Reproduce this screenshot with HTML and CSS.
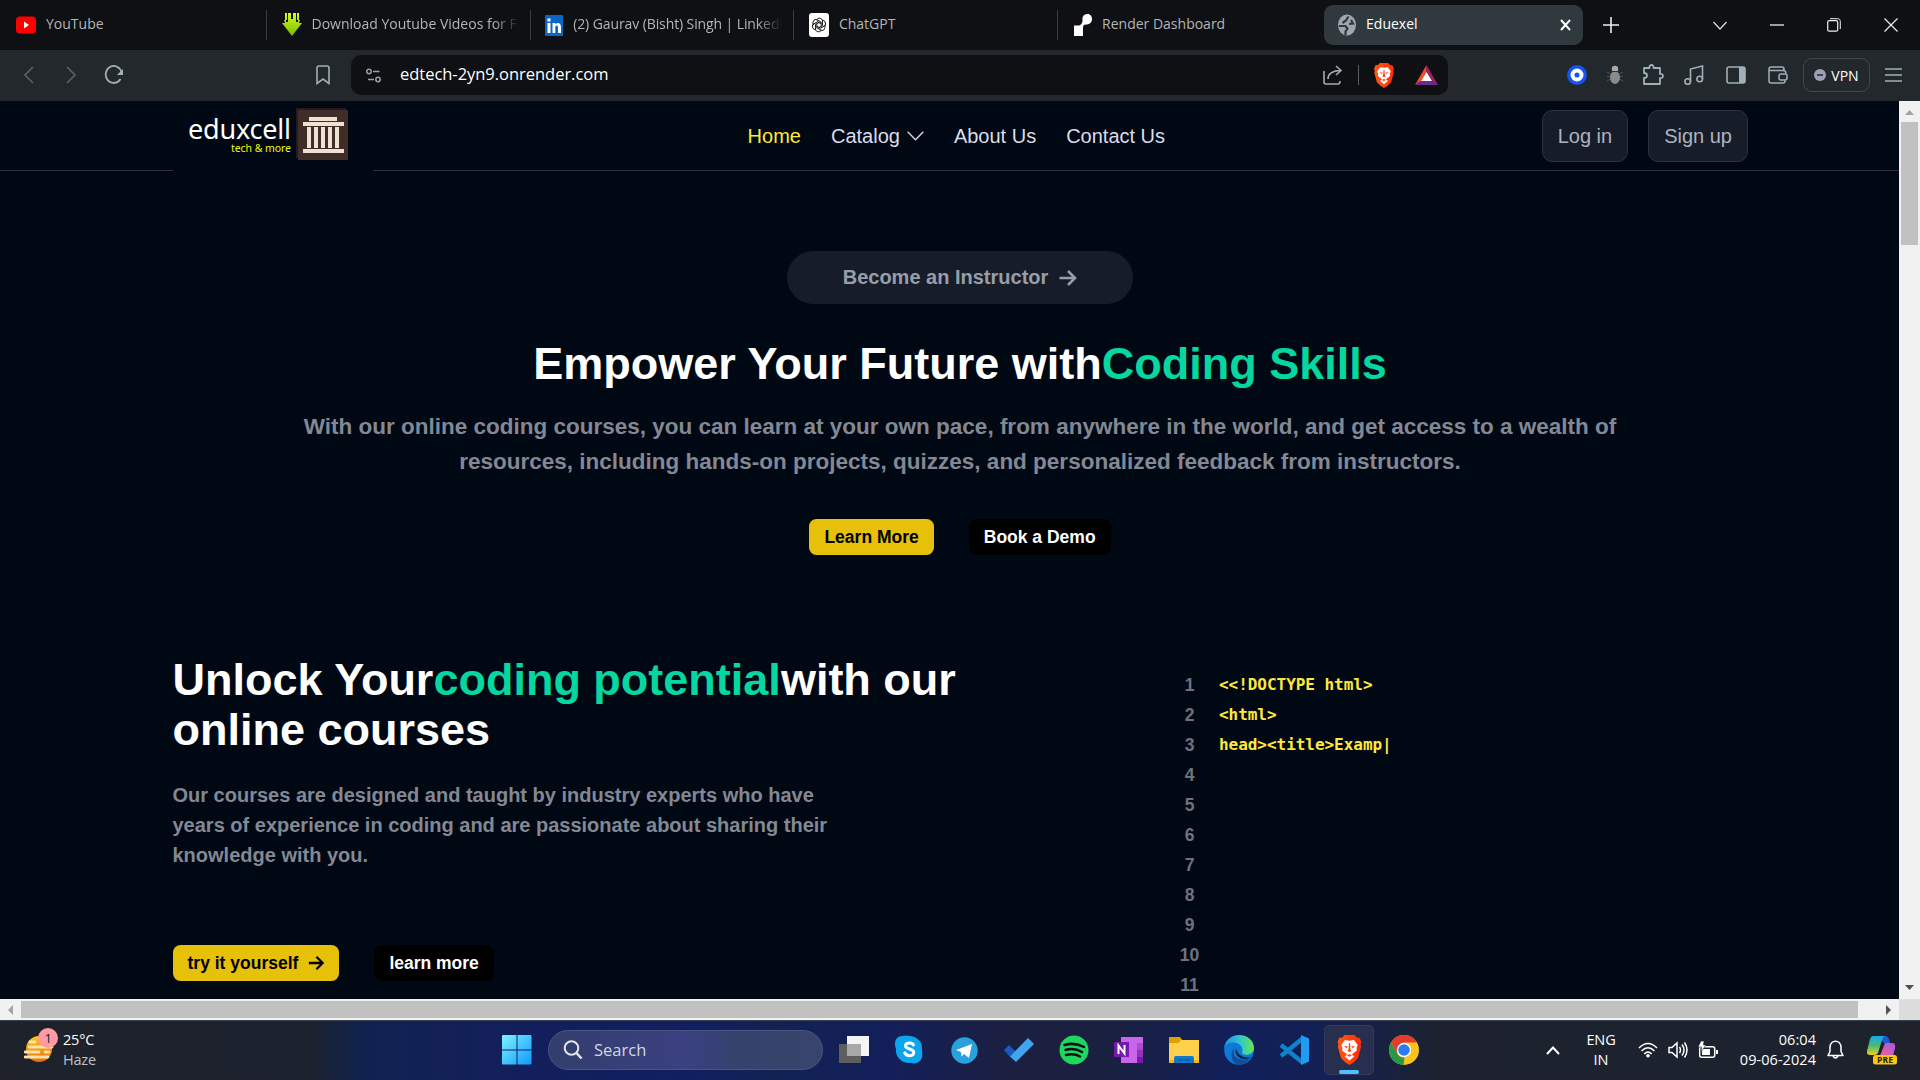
FILE: index.html
```html
<!DOCTYPE html>
<html lang="en">
<head>
<meta charset="utf-8">
<title>Eduexel</title>
<link rel="stylesheet" href="styles.css">
</head>
<body>
<svg width="0" height="0" class="defs" aria-hidden="true">
  <defs>
    <linearGradient id="bg1" x1="0" x2="1"><stop offset="0" stop-color="#ff5a13"/><stop offset="1" stop-color="#ff2a0a"/></linearGradient>
    <symbol id="brave" viewBox="0 0 24 30">
      <path fill="url(#bg1)" d="M7 0h10l2.500 2.800 2.500-.3L24 7l-1 2.500.7 2-3.200 11.500L16 27.500 12 30l-4-2.500L3.500 23 .3 11.500l.7-2L0 7l2-4.500 2.500.3z"/>
      <path fill="#fff" d="M7.500 5l4.500.8 4.500-.8 3.700 5-1.200 3 .3 2.500-5 4 2.500 2L12 25.500 7.200 21.500l2.500-2-5-4 .3-2.500-1.200-3z"/>
      <path fill="#ff3d10" d="M6.500 11l4 .6-1.500 1.600zM17.500 11l-4 .6 1.500 1.600zM11.500 8h1l.5 6.500 1 1.500-2 1-2-1 1-1.500zM9.500 20.300l2.500-1 2.500 1-2.500 1.400z"/>
    </symbol>
    <symbol id="arrow" viewBox="0 0 18 18"><path d="M1 9h15M9.500 2l7 7-7 7" fill="none" stroke="currentColor" stroke-width="2.600"/></symbol>
  </defs>
</svg>

<div class="tabs">
  <div class="tab"><svg width="20" height="18" viewBox="0 0 20 18"><rect width="20" height="17" rx="4" y=".5" fill="#f00"/><path d="M8 5.500l5 3.500-5 3.500z" fill="#fff"/></svg><span class="tx">YouTube</span></div>
  <div class="tab"><svg width="20" height="24" viewBox="0 0 20 24"><defs><linearGradient id="dl" x2="0" y2="1"><stop stop-color="#cf2"/><stop offset="1" stop-color="#7db800"/></linearGradient></defs><path fill="url(#dl)" d="M3 0h2v7H3zM15 0h2v7h-2zM6 0h3v6h2V0h3v9h2v-2h2l-1 3h3l-10 13L0 10h3L2 7h2v2h2z"/></svg><span class="tx">Download Youtube Videos for Fr</span></div>
  <div class="tab"><svg width="18" height="21" viewBox="0 0 18 21"><rect width="18" height="21" rx="1" fill="#0a66c2"/><path fill="#fff" d="M2.500 8h3v10h-3zM2.500 3.500h3v3h-3zM7.500 8h2.800v1.500C12 7 16 7.500 16 12v6h-3v-5.500c0-3-2.700-2.500-2.700 0V18H7.500z"/></svg><span class="tx tx-li">(2) Gaurav (Bisht) Singh | LinkedIn</span></div>
  <div class="tab"><svg width="20" height="24" viewBox="0 0 20 24"><rect width="20" height="24" rx="3" fill="#fff"/><g fill="none" stroke="#222" stroke-width="1"><path id="petal" d="M7.500 7c1.500-3 6-2 6 1v4.500L10 14.500"/><use href="#petal" transform="rotate(60 10 12)"/><use href="#petal" transform="rotate(120 10 12)"/><use href="#petal" transform="rotate(180 10 12)"/><use href="#petal" transform="rotate(240 10 12)"/><use href="#petal" transform="rotate(300 10 12)"/></g></svg><span class="tx">ChatGPT</span></div>
  <div class="tab"><svg width="18" height="22" viewBox="0 0 18 22"><path fill="#fff" d="M8.500 6C8 2 10.500 0 13.500 0S18 2.500 18 5c0 4-3 5.500-6 5.500-2 0-3 1-3 3V22H0V11.500h4.500C7 11.500 8.500 9 8.500 6z"/></svg><span class="tx">Render Dashboard</span></div>
  <div class="tab active"><svg width="18" height="22" viewBox="0 0 18 22"><ellipse cx="9" cy="11" rx="9" ry="10.500" fill="#9fa6ac"/><path d="M10.500 2.500L8 6.500 4.500 9M1 12h6.500l2 2.500-2 3V21M13 6l2 3.500-4 .5" fill="none" stroke="#30393e" stroke-width="2.200"/></svg><span class="tx">Eduexel</span><svg class="x" width="11" height="12" viewBox="0 0 11 12"><path d="M1 1l9 10M10 1L1 11" stroke="#fff" stroke-width="2"/></svg></div>
  <div class="wins">
    <svg width="16" height="16" viewBox="0 0 16 16"><path d="M8 0v16M0 8h16" stroke="#eee" stroke-width="1.600"/></svg>
    <svg class="w2" width="14" height="9" viewBox="0 0 14 9"><path d="M.5 1L7 8l6.500-7" fill="none" stroke="#ddd" stroke-width="1.200"/></svg>
    <svg width="14" height="2"><path d="M0 1h14" stroke="#eee" stroke-width="1.300"/></svg>
    <svg width="14" height="14" viewBox="0 0 14 14"><path d="M3 .7h7.500c2 0 2.800 1 2.800 2.800V11" fill="none" stroke="#eee"/><rect x=".7" y="2.700" width="10" height="10.500" rx="1.500" fill="none" stroke="#eee" stroke-width="1.200"/></svg>
    <svg width="14" height="14" viewBox="0 0 14 14"><path d="M.5.5l13 13M13.500.5l-13 13" stroke="#eee" stroke-width="1.200"/></svg>
  </div>
</div>

<div class="toolbar">
  <div class="navbtns">
    <svg width="10" height="18" viewBox="0 0 10 18"><path d="M9 1L1 9l8 8" fill="none" stroke="#5a6165" stroke-width="1.600"/></svg>
    <svg width="10" height="18" viewBox="0 0 10 18"><path d="M1 1l8 8-8 8" fill="none" stroke="#5a6165" stroke-width="1.600"/></svg>
    <svg width="20" height="20" viewBox="0 0 20 20"><path d="M17.500 7.500A8 8.500 0 1 0 16.500 14" fill="none" stroke="#9fb0b8" stroke-width="1.800"/><path d="M19 4v6h-6z" fill="#9fb0b8"/></svg>
    <svg class="bm" width="14" height="20" viewBox="0 0 14 20"><path d="M1 18.500V3q0-2 2-2h8q2 0 2 2v15.500L7 14z" fill="none" stroke="#9fb0b8" stroke-width="1.600"/></svg>
  </div>
  <div class="url">
    <svg width="15" height="15" viewBox="0 0 15 15"><g fill="none" stroke="#9aa0a6" stroke-width="1.500"><circle cx="3" cy="3.500" r="2.200"/><path d="M7 3.500h6.500M2 11.500h6"/><circle cx="12" cy="11.500" r="2.200"/></g></svg>
    <span class="addr">edtech-2yn9.onrender.com</span>
    <svg width="20" height="20" viewBox="0 0 20 20"><path d="M1 6v11q0 2 2 2h12q2 0 2-3M5 14c0-5 3-8 12-8.500M13 1l5 4.500-5 4.500" fill="none" stroke="#a5acb0" stroke-width="1.600"/></svg>
    <i class="vsep"></i>
    <svg width="20" height="25"><use href="#brave"/></svg>
    <svg class="bat" width="23" height="20" viewBox="0 0 23 20"><path fill="#ff4724" d="M11.500 0v7L6 16l-6 4z"/><path fill="#9e1f63" d="M11.500 0L23 20l-6-4-5.500-9z"/><path fill="#662d91" d="M0 20l6-4h11l6 4z"/><path fill="#fff" d="M11.500 7l5.500 9H6z"/></svg>
  </div>
  <div class="ext">
    <svg width="20" height="20" viewBox="0 0 20 20"><circle cx="10" cy="10" r="10" fill="#1554f0"/><circle cx="10" cy="10" r="4.500" fill="#1554f0" stroke="#fff" stroke-width="4"/></svg>
    <svg width="18" height="20" viewBox="0 0 18 20"><path d="M1 7l16 9M17 7L1 16M1 11.500h16" stroke="#4e5254"/><ellipse cx="9" cy="12.500" rx="5" ry="6.500" fill="#8a8a8a"/><circle cx="9" cy="4" r="3.200" fill="#aaa"/><path d="M5 6.500h8" stroke="#333"/></svg>
    <svg width="22" height="22" viewBox="0 0 22 22"><path d="M2 4h5.500c-1-4 5-4 4 0H18v6c4-1 4 5 0 4v6H2v-6c4 0 4-5 0-5z" fill="none" stroke="#9fb0b8" stroke-width="1.800" stroke-linejoin="round"/></svg>
    <svg width="20" height="20" viewBox="0 0 20 20"><path d="M6.500 16.500V4L18.500 1v13" fill="none" stroke="#9fb0b8" stroke-width="1.600"/><circle cx="3.700" cy="16.500" r="2.800" fill="none" stroke="#9fb0b8" stroke-width="1.600"/><circle cx="15.700" cy="14" r="2.800" fill="none" stroke="#9fb0b8" stroke-width="1.600"/></svg>
    <svg width="20" height="18" viewBox="0 0 20 18"><rect x="1" y="1" width="18" height="16" rx="2" fill="none" stroke="#9fb0b8" stroke-width="1.600"/><path d="M13 1h6v16h-6z" fill="#9fb0b8"/></svg>
    <svg width="20" height="18" viewBox="0 0 20 18"><path d="M16 5V3q0-2-2-2H3Q1 1 1 3v12q0 2 2 2h12q2 0 2-2v-1M1 4.500h14q3 0 3 3" fill="none" stroke="#9fb0b8" stroke-width="1.500"/><rect x="11" y="8" width="8" height="6" rx="2" fill="none" stroke="#9fb0b8" stroke-width="1.500"/></svg>
  </div>
  <div class="vpn"><svg width="12" height="12" viewBox="0 0 12 12"><circle cx="6" cy="6" r="6" fill="#9c9fb5"/><path d="M3 6h6" stroke="#22282b" stroke-width="1.500"/></svg><span>VPN</span></div>
  <svg class="burger" width="17" height="14" viewBox="0 0 17 14"><path d="M0 1h17M0 7h17M0 13h17" stroke="#9fb0b8" stroke-width="1.500"/></svg>
</div>

<div class="view">
  <div class="page">
    <header class="header">
      <svg class="logo" width="200" height="70" viewBox="0 0 200 70">
        <text x="15" y="38" textLength="103" font-size="27" fill="#fff">eduxcell</text>
        <text x="58" y="51" textLength="60" font-size="10.500" fill="#f5f50a">tech &amp; more</text>
        <path fill="#231b22" d="M123 7h50v50h-50z"/><path fill="#402d28" d="M125 9h50v50h-50z"/>
        <path fill="#eee2d3" d="M136 16h28v4h-28zM130 21h41v4h-41zM134 26h4v21h-4zM141 26h4v21h-4zM148 26h4v21h-4zM155 26h4v21h-4zM162 26h4v21h-4zM130 48h41v4h-41z"/>
      </svg>
      <nav class="menu"><a class="on">Home</a><a class="cat">Catalog<svg width="17" height="10" viewBox="0 0 17 10"><path d="M.7.8l7.800 8 7.800-8" fill="none" stroke="currentColor" stroke-width="1.300"/></svg></a><a>About Us</a><a>Contact Us</a></nav>
      <div class="auth"><a>Log in</a><a>Sign up</a></div>
    </header>
    <section class="hero">
      <a class="pill">Become an Instructor<svg width="19" height="18"><use href="#arrow"/></svg></a>
      <h1>Empower Your Future with<em>Coding Skills</em></h1>
      <p>With our online coding courses, you can learn at your own pace, from anywhere in the world, and get access to a wealth of<br>resources, including hands-on projects, quizzes, and personalized feedback from instructors.</p>
      <div class="btns"><a class="btn y">Learn More</a><a class="btn k">Book a Demo</a></div>
    </section>
    <section class="split">
      <div class="left">
        <h2>Unlock Your<em>coding potential</em>with our<br>online courses</h2>
        <p>Our courses are designed and taught by industry experts who have<br>years of experience in coding and are passionate about sharing their<br>knowledge with you.</p>
        <div class="btns"><a class="btn y">try it yourself<svg width="16" height="16"><use href="#arrow"/></svg></a><a class="btn k">learn more</a></div>
      </div>
      <div class="code">
        <div class="nums"><span>1</span><span>2</span><span>3</span><span>4</span><span>5</span><span>6</span><span>7</span><span>8</span><span>9</span><span>10</span><span>11</span></div>
        <pre>&lt;&lt;!DOCTYPE html&gt;
&lt;html&gt;
head&gt;&lt;title&gt;Examp<b class="cur">|</b></pre>
      </div>
    </section>
  </div>
  <div class="vbar"><svg width="9" height="5" viewBox="0 0 9 5"><path d="M4.500 0L9 5H0z" fill="#a3a3a3"/></svg><i></i><svg width="9" height="5" viewBox="0 0 9 5"><path d="M0 0h9L4.500 5z" fill="#505050"/></svg></div>
</div>
<div class="hbar"><svg width="5" height="10" viewBox="0 0 5 10"><path d="M5 0v10L0 5z" fill="#a3a3a3"/></svg><i></i><svg width="5" height="10" viewBox="0 0 5 10"><path d="M0 0l5 5-5 5z" fill="#505050"/></svg><b></b></div>

<div class="taskbar">
  <div class="weather">
    <svg width="36" height="36" viewBox="0 0 36 36"><defs><linearGradient id="sun" x2="0" y2="1"><stop stop-color="#ffc90e"/><stop offset="1" stop-color="#ec6a08"/></linearGradient></defs><circle cx="15" cy="21" r="13" fill="url(#sun)"/><path d="M6 14h5M5 19h23M1 24h14M21 24h4M1 29h23" stroke="#fbe3b0" stroke-width="2.800" stroke-linecap="round"/><circle cx="24" cy="10" r="10" fill="#ff99a4"/><text x="24" y="15" text-anchor="middle" font-size="13" fill="#222">1</text></svg>
    <div><span>25°C</span><span class="dim">Haze</span></div>
  </div>
  <svg class="start" width="30" height="30" viewBox="0 0 30 30"><defs><linearGradient id="win" x2="1" y2="1"><stop stop-color="#7df3ff"/><stop offset="1" stop-color="#0f98fb"/></linearGradient></defs><path fill="url(#win)" d="M1 0h13.500v14.500H0V1q0-1 1-1zM15.500 0H28q1.500 0 1.500 1v13.500h-14zM0 15.500h14.500v14H1q-1 0-1-1zM15.500 15.500h14V28q0 1.500-1 1.500h-13z"/></svg>
  <div class="search"><svg width="20" height="20" viewBox="0 0 20 20"><circle cx="8.500" cy="8" r="6.800" fill="none" stroke="#e4e6ee" stroke-width="2"/><path d="M13.500 13l5 5.500" stroke="#e4e6ee" stroke-width="2.500"/></svg><span>Search</span></div>
  <div class="apps">
    <div><svg width="30" height="30" viewBox="0 0 30 30"><path fill="#5e5e5e" d="M0 9h22v19H0z"/><path fill="#f4f4f4" d="M8 1h22v20H8z"/><path fill="#a8a8a8" d="M8 9h14v12H8z"/></svg></div>
    <div><svg width="30" height="30" viewBox="0 0 30 30"><path fill="#0aa5ec" d="M8 1q4-1 8 0C25 2 29 8 28 17c2 7-4 13-11 11C8 29 1 22 2 14-1 6 3 1 8 1z"/><path d="M19.500 10c-1.500-3-8-2.500-8 .8 0 4 8.300 2.500 8.300 6.800 0 4-7.500 4-9 .3" fill="none" stroke="#fff" stroke-width="3" stroke-linecap="round"/></svg></div>
    <div><svg width="27" height="27" viewBox="0 0 27 27"><circle cx="13.500" cy="13.500" r="13.200" fill="#2aa1dc"/><path fill="#fff" d="M5 13L21 7l-3 14-5-4-2.500 2.500-.5-4.500z"/></svg></div>
    <div><svg width="30" height="26" viewBox="0 0 30 26"><path fill="#185abd" d="M5 8l7 7-5.500 5.500L0 13z"/><path fill="#41a5ee" d="M24 1l6 6-18 18-6-5.500z"/></svg></div>
    <div><svg width="30" height="30" viewBox="0 0 30 30"><circle cx="15" cy="15" r="14.500" fill="#1ed760"/><path d="M5.500 10q10-3 19.500 2M6.500 15q9-2.500 16.500 2M7 20q8-2 14 1.500" fill="none" stroke="#101010" stroke-width="2.500" stroke-linecap="round"/></svg></div>
    <div><svg width="30" height="28" viewBox="0 0 30 28"><path fill="#ca64ea" d="M7 1h22v26H7z"/><path fill="#ae4bd5" d="M23 7h6v7h-6z"/><path fill="#9332bf" d="M23 14h6v7h-6z"/><path fill="#7719aa" d="M23 21h6v6h-6zM0 6h15v15H0z"/><path d="M4.500 18V9.500l6 8V9" fill="none" stroke="#fff" stroke-width="2"/></svg></div>
    <div><svg width="30" height="28" viewBox="0 0 30 28"><path fill="#e0a100" d="M0 1h11l3 4h-3l-3 4H0z"/><path fill="#ffd04a" d="M0 7h9l3-3h18v23H0z"/><path fill="#f5b91f" d="M0 24h30v3H0z"/><path fill="#1178c9" d="M5 27v-5q0-2 2-2h16q2 0 2 2v5z"/><path d="M9 24h12" stroke="#06508f"/></svg></div>
    <div><svg width="30" height="30" viewBox="0 0 30 30"><defs><linearGradient id="eg" x1="0" x2="1"><stop stop-color="#1b91dc"/><stop offset=".5" stop-color="#30c2d8"/><stop offset="1" stop-color="#66e84f"/></linearGradient></defs><circle cx="15" cy="15" r="14.800" fill="#0c7ad6"/><path fill="url(#eg)" d="M0 13C1 5 8 0 15 0c9 0 15 6 15 13 0 6-7 8-11 6-2-1-.5-2-.5-4C18 6 4 5 0 13z"/><path fill="#134c9a" d="M11 12c-5 8 3 16 15 11-3 5-8 7-12 7-7-2-9-13-3-18z"/><path fill="#16224a" d="M12.500 13.500c0 6 8 11 15 8-9 7-19-2-15-8z"/></svg></div>
    <div><svg width="30" height="30" viewBox="0 0 30 30"><path d="M23 4L2 21M2 10l21 17" stroke="#0b83ce" stroke-width="4.500"/><path fill="#1f9cf0" d="M22 0l8 3.500v23L22 30z"/></svg></div>
    <div class="cur-app"><svg width="25" height="30"><use href="#brave"/></svg></div>
    <div><svg width="30" height="30" viewBox="0 0 30 30"><circle cx="15" cy="15" r="15" fill="#fcc31e"/><path fill="#e33b2e" d="M2 7.500a15 15 0 0 1 26 0H15L8.500 19z"/><path fill="#279847" d="M2 7.500L8.500 19q2.500 4 7 3.500L14.500 30A15 15 0 0 1 2 7.500z"/><circle cx="15" cy="15" r="7.200" fill="#fff"/><circle cx="15" cy="15" r="5.800" fill="#2a7bf0"/></svg></div>
  </div>
  <div class="tray">
    <svg width="14" height="9" viewBox="0 0 14 9"><path d="M1 8l6-6.500L13 8" fill="none" stroke="#fff" stroke-width="2"/></svg>
    <div class="lang"><span>ENG</span><span>IN</span></div>
    <svg width="20" height="16" viewBox="0 0 20 16"><g fill="none" stroke="#fff" stroke-width="1.600"><path d="M1 6q9-9 18 0M3.500 9q6.500-6.500 13 0M6.300 12q3.700-4 7.400 0"/></g><circle cx="10" cy="13.700" r="1.800" fill="#fff"/></svg>
    <svg width="20" height="18" viewBox="0 0 20 18"><g fill="none" stroke="#fff" stroke-width="1.500"><path d="M1 6.500h3L9 2v14l-5-4.500H1zM11.500 6q2 3 0 6M14 3.500q4 5.500 0 11M16.500 1.500q5 7.500 0 15"/></g></svg>
    <svg width="20" height="18" viewBox="0 0 20 18"><rect x="1.700" y="5.700" width="15" height="10.500" rx="2" fill="none" stroke="#fff" stroke-width="1.500"/><path fill="#fff" d="M18 9h2v4h-2zM4 8h8v6H4z"/><path fill="#fff" stroke="#1c212c" stroke-width=".6" d="M3 0h3l-.5 4H8L3 11l.5-5H0z"/></svg>
    <div class="time"><span>06:04</span><span>09-06-2024</span></div>
    <svg width="17" height="20" viewBox="0 0 17 20"><path d="M1 15.500h15l-2-4V7.500C14 -1 3 -1 3 7.500v4zM6 16q2.500 4 5 0" fill="none" stroke="#fff" stroke-width="1.500" stroke-linejoin="round"/></svg>
    <svg class="cop" width="30" height="30" viewBox="0 0 30 30"><defs><linearGradient id="c1" x2="0" y2="1"><stop stop-color="#1aa5ef"/><stop offset=".5" stop-color="#45b977"/><stop offset="1" stop-color="#f0d018"/></linearGradient><linearGradient id="c2" x1="1" x2="0" y2="1"><stop stop-color="#a257ee"/><stop offset="1" stop-color="#f7618e"/></linearGradient></defs><path fill="#1d5bd8" d="M10 1h8q3 0 4 3l1 4h-6z"/><path fill="url(#c1)" d="M6 1h13q-3 0-4 4l-4 13q-1 2-4 2H3q-4 0-3-4L3 4q1-3 3-3z"/><path fill="url(#c2)" d="M18 8h7q4 0 3 5l-2 8H13z"/><rect x="6" y="20" width="24" height="9.500" rx="2.500" fill="#fcc60e"/><text x="18" y="28" text-anchor="middle" font-size="8.500" font-weight="700" textLength="16" fill="#222">PRE</text></svg>
  </div>
</div>
</body>
</html>
```
FILE: styles.css
```css
* { box-sizing: border-box; }
body { margin: 0; width: 1920px; height: 1080px; overflow: hidden; background: #000814; font-family: "Open Sans", "Noto Sans", sans-serif; display: flex; flex-direction: column; }
svg { display: block; flex: none; }
.defs { position: absolute; }

.tabs { height: 50px; flex: none; background: #0e1014; display: flex; align-items: center; padding-left: 3px; }
.tab { width: 264px; height: 30px; padding: 0 11px 0 14.500px; display: flex; align-items: center; gap: 10px; border-right: 1px solid #3a3c40; color: #b4b5b7; font-size: 14px; flex: none; }
.tab:first-child { padding-left: 13px; }
.tab:nth-child(5) { border-right: 0; padding-left: 16px; }
.tab:nth-child(n+2):nth-child(-n+4) { width: 263.700px; }
.tx { white-space: nowrap; overflow: hidden; flex: 1; line-height: 20px; padding-bottom: 2px; }
.tab:nth-child(2) .tx, .tab:nth-child(3) .tx { -webkit-mask-image: linear-gradient(90deg, #000 88%, transparent); mask-image: linear-gradient(90deg, #000 88%, transparent); }
.tx-li { letter-spacing: -.1px; }
.tab.active { width: 259px; height: 40px; border: 0; border-radius: 9px; background: #30393e; color: #fff; margin-left: 2px; padding: 0 12px 0 14px; }
.wins { flex: 1; display: flex; align-items: center; padding: 0 22px 0 20px; }
.wins svg + svg { margin-left: 43px; }
.wins .w2.w2 { margin-left: 94px; }

.toolbar { height: 51px; flex: none; background: #22282b; display: flex; align-items: center; padding-bottom: 1px; }
.navbtns { width: 351px; display: flex; align-items: center; padding-left: 24px; gap: 32px; }
.navbtns svg:nth-child(3) { margin-left: -4px; }
.navbtns .bm { margin-left: 160px; }
.url { width: 1097px; height: 40px; border-radius: 10px; background: #0e1014; display: flex; align-items: center; padding: 0 10px 0 15px; }
.addr { flex: 1; margin-left: 19px; color: #fff; font-size: 16.500px; line-height: 22px; padding-bottom: 2px; letter-spacing: -.03px; }
.vsep { width: 1px; height: 20px; background: #5a5d60; margin: 0 15px; }
.bat { margin-left: 21px; }
.ext { width: 355px; padding-left: 109px; display: grid; grid-template-columns: 40px 36px 40px 42px 42px 42px; justify-items: center; align-items: center; }
.vpn { width: 67px; height: 34px; border: 1px solid #40494d; border-radius: 9px; display: flex; align-items: center; justify-content: center; gap: 5px; color: #fff; font-size: 14px; letter-spacing: 0; }
.burger { margin-left: 15px; }

.view { height: 898px; flex: none; display: flex; }
.page { width: 1899px; height: 898px; overflow: hidden; background: #000814; font-family: "Liberation Sans", Arial, sans-serif; }
.header { width: 1920px; height: 70px; border-bottom: 1px solid #2c333f; display: flex; padding: 0 172px 0 173px; align-items: flex-start; justify-content: space-between; }
.logo { background: #000814; font-family: "Noto Sans", sans-serif; }
.menu { display: flex; gap: 30px; font-size: 20px; line-height: 70px; color: #dbddea; margin-right: 2px; }
.on { color: #ffe83d; }
.cat { display: flex; align-items: center; gap: 7px; }
.auth { display: flex; gap: 20px; padding-top: 9px; }
.auth a { height: 52px; border: 1px solid #2c333f; border-radius: 10px; background: #161d29; color: #afb2bf; font-size: 20px; line-height: 50px; padding: 0 15px; }
em { font-style: normal; color: #06d6a0; }
h1, h2, p { margin: 0; }
h1, h2 { font-size: 45px; line-height: 50px; color: #fff; font-weight: 600; }
.hero { width: 1920px; display: flex; flex-direction: column; align-items: center; padding-top: 80px; }
.pill { width: 346px; height: 53px; border-radius: 27px; background: #161d29; color: #999daa; font-weight: 700; font-size: 20px; display: flex; align-items: center; justify-content: center; gap: 10px; }
.hero h1 { margin-top: 35px; }
.hero p { margin-top: 20px; font-size: 22.500px; line-height: 35px; font-weight: 700; color: #838894; text-align: center; }
.btns { display: flex; gap: 35px; }
.hero .btns { margin-top: 40px; }
.btn { height: 36px; border-radius: 7.500px; padding: 0 15px; font-size: 17.500px; line-height: 36px; font-weight: 700; display: flex; align-items: center; gap: 10px; }
.y { background: #e7c009; color: #000; }
.k { background: #000; color: #fff; }
.split { display: flex; width: 1920px; padding: 100px 173px 0 172.500px; }
.left { width: 1006.500px; }
.left p { margin-top: 25px; font-size: 20px; line-height: 30px; font-weight: 700; color: #838894; }
.left .btns { margin-top: 75px; }
.code { display: flex; padding-top: 15px; font-weight: 700; }
.nums { width: 21px; display: flex; flex-direction: column; text-align: center; font-size: 17.500px; line-height: 30px; color: #6e727f; }
.code pre { margin: 0 0 0 19px; font: 700 16px/30px "DejaVu Sans Mono", monospace; color: #ffe83d; letter-spacing: -.04px; }

.vbar { width: 21px; height: 898px; background: #f1f1f1; display: flex; flex-direction: column; align-items: center; padding: 9px 0; }
.vbar i { width: 17px; height: 123px; background: #c1c1c1; margin-top: 7px; margin-bottom: auto; }
.hbar { height: 21px; flex: none; background: #f1f1f1; display: flex; align-items: center; padding-left: 8px; }
.hbar i { width: 1837px; height: 17px; background: #c1c1c1; margin: 0 28px 0 8px; }
.hbar b { width: 21px; height: 21px; background: #dcdcdc; margin-left: auto; }

.taskbar { height: 60px; flex: none; border-top: 1px solid #3c4152; padding-bottom: 1px; background: linear-gradient(90deg, #1f222b 0, #1c222e 310px, #112250 365px, #131f5c 520px, #111f60 690px, #122252 770px, #141f5a 890px, #1b1f40 1010px, #1a2040 1110px, #11205a 1230px, #132054 1330px, #1d222e 1440px, #1c222e 1800px, #202229 1920px); display: flex; align-items: center; color: #fff; font-size: 14.500px; line-height: 20px; }
.weather { width: 502px; padding-left: 24px; display: flex; gap: 3px; align-items: center; letter-spacing: -.2px; }
.weather > svg { margin-top: -8px; }
.weather span, .lang span, .time span { display: block; }
.weather > div, .lang, .time { padding-bottom: 1px; }
.dim { color: #bfc1c8; }
.search { margin-left: 16px; width: 275px; height: 40px; border-radius: 20px; border: 1px solid #4a5585; background: linear-gradient(90deg, #323e6d, #3b4080 50%, #33436b 70%, #38446b); display: flex; align-items: center; gap: 11px; padding-left: 14px; font-size: 16.500px; color: #d3d6e2; }
.apps { display: flex; margin-left: 6px; }
.apps div { width: 50px; height: 50px; margin-right: 5px; display: flex; align-items: center; justify-content: center; }
.apps .cur-app { position: relative; background: #282e4d; border: 1px solid #343a57; border-radius: 5px; }
.cur-app::after { content: ""; position: absolute; bottom: 0; left: 14px; width: 20px; height: 4px; border-radius: 2px; background: #4cc2ff; }
.tray { display: flex; align-items: center; flex: 1; padding-left: 112px; }
.lang { width: 48px; margin: 0 13px 0 17px; text-align: center; letter-spacing: -.1px; }
.lang + svg + svg, .lang + svg + svg + svg { margin-left: 10px; }
.time { width: 98px; text-align: right; letter-spacing: .05px; }
.time + svg { margin-left: 11px; }
.cop { margin-left: 23px; }
```
